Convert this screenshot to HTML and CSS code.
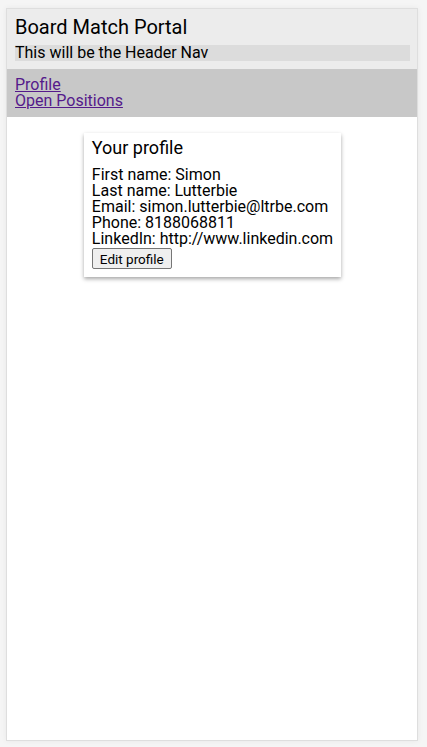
FILE: index.html
```html
<!DOCTYPE html>
<html>
<head>
<meta charset="utf-8">
<link rel="stylesheet" href="styles.css">
</head>
<body>
<div class="app">
  <header class="header">
    <div class="title">Board Match Portal</div>
    <div class="header-nav">This will be the Header Nav</div>
  </header>
  <nav class="nav">
    <a href="#" class="link">Profile</a>
    <a href="#" class="link">Open Positions</a>
  </nav>
  <main class="main">
    <section class="card">
      <div class="card-title">Your profile</div>
      <div class="line">First name: Simon</div>
      <div class="line">Last name: Lutterbie</div>
      <div class="line">Email: simon.lutterbie@ltrbe.com</div>
      <div class="line">Phone: 8188068811</div>
      <div class="line">LinkedIn: http://www.linkedin.com</div>
      <button class="btn">Edit profile</button>
    </section>
  </main>
</div>
</body>
</html>
```
FILE: styles.css
```css
html, body {
  margin: 0;
  padding: 0;
}
body {
  background: #f5f5f5;
  font-family: Roboto, "Liberation Sans", sans-serif;
  color: #000;
  padding: 8px 9px 6px 6px;
}
.app {
  height: 731px;
  border: 1px solid #dedede;
  background: #fff;
  box-shadow: 0 0 6px rgba(0,0,0,0.06);
  display: flex;
  flex-direction: column;
}
.header {
  background: #ececec;
  padding: 8px 7px 8px 8px;
  display: flex;
  flex-direction: column;
  gap: 8px;
}
.title {
  font-size: 20px;
  line-height: 20px;
}
.header-nav {
  background: #dcdcdc;
  font-size: 16px;
  line-height: 16px;
}
.nav {
  background: #c8c8c8;
  padding: 8px;
  display: flex;
  flex-direction: column;
}
.link {
  color: #551a8b;
  font-size: 16px;
  line-height: 16px;
  align-self: flex-start;
}
.main {
  flex: 1;
  display: flex;
  flex-direction: column;
  align-items: center;
  padding-top: 16px;
  padding-left: 1px;
}
.card {
  background: #fff;
  padding: 6px 8px 8px 8px;
  box-shadow: 0 2px 4px rgba(0,0,0,0.35);
  display: flex;
  flex-direction: column;
  align-items: flex-start;
}
.card-title {
  font-size: 18px;
  line-height: 18px;
  margin-bottom: 10px;
}
.line {
  font-size: 16px;
  line-height: 16px;
}
.btn {
  font-family: Roboto, "Liberation Sans", sans-serif;
  font-size: 13.5px;
  margin: 1px 0 0 0;
  padding: 1px 7px;
  height: 21px;
  box-sizing: border-box;
  background: #efefef;
  border: 1px solid #767676;
  border-radius: 2px;
  color: #000;
}
```
